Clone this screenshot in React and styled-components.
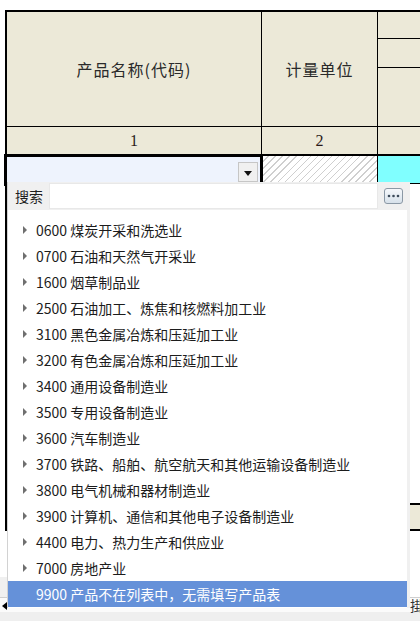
import React from "react";
import styled, { createGlobalStyle } from "styled-components";

const GlobalStyle = createGlobalStyle`
  html, body { margin: 0; padding: 0; background: #fff; overflow: hidden; }
  #root { width: 420px; height: 621px; overflow: hidden; }
  * { box-sizing: border-box; }
`;

const Page = styled.div`
  position: relative;
  width: 420px;
  height: 621px;
  overflow: hidden;
  padding-top: 10px;
  background: #fff;
  font-family: "Noto Sans CJK SC", "Noto Sans", sans-serif;
`;

const Sheet = styled.div`
  margin-left: 5px;
  width: 520px;
  border-left: 2px solid #000;
  border-top: 2px solid #000;
`;

const Row = styled.div`
  display: flex;
  height: ${(p) => p.$h}px;
  background: ${(p) => p.$bg || "#fff"};
  border-top: ${(p) => (p.$bt ? `${p.$bt}px solid #000` : "none")};
  border-bottom: ${(p) => (p.$bb ? `${p.$bb}px solid #000` : "none")};
  box-sizing: content-box;
`;

const Cell = styled.div`
  flex: ${(p) => (p.$w ? `0 0 ${p.$w}px` : "1 1 auto")};
  border-right: ${(p) => (p.$w ? "1px solid #000" : "none")};
  display: flex;
  align-items: center;
  justify-content: center;
  color: #222;
`;

const HeadText = styled.span`
  font-family: "Noto Sans CJK SC", sans-serif;
  font-size: 16px;
  letter-spacing: 1px;
  color: #2a2a2a;
`;

const NumText = styled.span`
  font-family: "Liberation Serif", serif;
  font-size: 16px;
  color: #2a1a1a;
`;

const SubStack = styled.div`
  flex: 1 1 auto;
  display: flex;
  flex-direction: column;
`;

const SubRow = styled.div`
  flex: ${(p) => (p.$h ? `0 0 ${p.$h}px` : "1 1 auto")};
  border-bottom: ${(p) => (p.$h ? "1px solid #000" : "none")};
`;

const SelectCell = styled(Cell)`
  position: relative;
  background: #eef3fd;
  justify-content: flex-end;
  align-items: flex-end;
  padding: 0 3px 1px 0;
`;

const SelectionFrame = styled.div`
  position: absolute;
  left: -3px;
  top: -2px;
  width: 259px;
  height: 32px;
  border: 3px solid #000;
  pointer-events: none;
`;

const DropButton = styled.div`
  width: 20px;
  height: 20px;
  background: #f0f0f0;
  border: 1px solid #c6c6c6;
  display: flex;
  align-items: center;
  justify-content: center;
  &::after {
    content: "";
    border-top: 5px solid #111;
    border-left: 4px solid transparent;
    border-right: 4px solid transparent;
    margin-top: 2px;
  }
`;

const HatchCell = styled(Cell)`
  background: repeating-linear-gradient(
    135deg,
    #fff 0px,
    #fff 4px,
    #cfcfcf 4px,
    #cfcfcf 5px
  );
`;

const CyanCell = styled(Cell)`
  background: #80ffff;
`;

const Gap = styled.div`
  height: ${(p) => p.$h}px;
  background: ${(p) => p.$bg || "#fff"};
  display: flex;
`;

const Corner = styled.div`
  flex: 0 0 8px;
  background: #f0f0f0;
`;

const TabBar = styled.div`
  height: 15px;
  border-top: 1px solid #cfcfcf;
  background: #fbfbfb;
  display: flex;
  align-items: center;
  padding-left: 2px;
  white-space: nowrap;
`;

const LeftArrow = styled.div`
  flex: 0 0 auto;
  border-right: 5px solid #000;
  border-top: 4px solid transparent;
  border-bottom: 4px solid transparent;
  margin-top: 2px;
`;

const TabSpacer = styled.div`
  flex: 0 0 403px;
`;

const TabLabel = styled.span`
  font-size: 14px;
  color: #333;
  line-height: 14px;
`;

const BottomStrip = styled.div`
  height: 20px;
  background: #efefef;
`;

/* popup */
const Popup = styled.div`
  position: absolute;
  left: 7px;
  top: 182px;
  width: 403px;
  height: 426px;
  background: #f0f0f0;
  border-left: 1px solid #d2d2d2;
  z-index: 5;
  display: flex;
  flex-direction: column;
`;

const SearchRow = styled.div`
  flex: 0 0 28px;
  display: flex;
  align-items: center;
  padding-left: 7px;
`;

const SearchLabel = styled.span`
  font-size: 14px;
  color: #1e1e1e;
  width: 28px;
  line-height: 16px;
`;

const SearchInput = styled.div`
  margin-left: 6px;
  width: 329px;
  height: 26px;
  background: #fff;
  border: 1px solid #e8e8e8;
`;

const MoreButton = styled.div`
  margin-left: 6px;
  width: 19px;
  height: 16px;
  border: 1px solid #8b98a5;
  border-radius: 3px;
  background: linear-gradient(#f6f8fb, #d7e1ea);
  display: flex;
  align-items: center;
  justify-content: center;
`;

const List = styled.div`
  flex: 1 1 auto;
  margin-right: 3px;
  background: #fff;
  padding-top: 7px;
  overflow: hidden;
`;

const Item = styled.div`
  height: 26px;
  display: flex;
  align-items: center;
  padding-left: 15px;
  font-size: 14px;
  white-space: nowrap;
  color: ${(p) => (p.$active ? "#fff" : "#1c1c1c")};
  background: ${(p) => (p.$active ? "#6591d9" : "transparent")};
`;

const Caret = styled.span`
  flex: 0 0 auto;
  width: 0;
  height: 0;
  border-left: 4px solid ${(p) => (p.$hidden ? "transparent" : "#6f6f6f")};
  border-top: 4px solid transparent;
  border-bottom: 4px solid transparent;
  margin-right: 9px;
`;

const items = [
  "0600 煤炭开采和洗选业",
  "0700 石油和天然气开采业",
  "1600 烟草制品业",
  "2500 石油加工、炼焦和核燃料加工业",
  "3100 黑色金属冶炼和压延加工业",
  "3200 有色金属冶炼和压延加工业",
  "3400 通用设备制造业",
  "3500 专用设备制造业",
  "3600 汽车制造业",
  "3700 铁路、船舶、航空航天和其他运输设备制造业",
  "3800 电气机械和器材制造业",
  "3900 计算机、通信和其他电子设备制造业",
  "4400 电力、热力生产和供应业",
  "7000 房地产业",
];

export default function App() {
  return (
    <Page>
      <GlobalStyle />
      <Sheet>
        <Row $h={114} $bb={1} $bg="#ece9d8">
          <Cell $w={255}>
            <HeadText>产品名称(代码)</HeadText>
          </Cell>
          <Cell $w={116}>
            <HeadText>计量单位</HeadText>
          </Cell>
          <SubStack>
            <SubRow $h={27} />
            <SubRow $h={29} />
            <SubRow />
          </SubStack>
        </Row>
        <Row $h={27} $bb={2} $bg="#ece9d8">
          <Cell $w={255}>
            <NumText>1</NumText>
          </Cell>
          <Cell $w={116}>
            <NumText>2</NumText>
          </Cell>
          <Cell />
        </Row>
        <Row $h={27} $bb={1}>
          <SelectCell $w={255}>
            <DropButton />
            <SelectionFrame />
          </SelectCell>
          <HatchCell $w={116} />
          <CyanCell />
        </Row>
        <Row $h={319} />
        <Row $h={24} $bt={2} $bb={2} $bg="#ece9d8" />
      </Sheet>
      <Gap $h={46} />
      <Gap $h={20}>
        <Corner />
      </Gap>
      <TabBar>
        <LeftArrow />
        <TabSpacer />
        <TabLabel>掛接</TabLabel>
      </TabBar>
      <BottomStrip />

      <Popup>
        <SearchRow>
          <SearchLabel>搜索</SearchLabel>
          <SearchInput />
          <MoreButton>
            <svg width="13" height="4" viewBox="0 0 13 4">
              <circle cx="2" cy="2" r="1.3" fill="#3d4b5a" />
              <circle cx="6.5" cy="2" r="1.3" fill="#3d4b5a" />
              <circle cx="11" cy="2" r="1.3" fill="#3d4b5a" />
            </svg>
          </MoreButton>
        </SearchRow>
        <List>
          {items.map((t) => (
            <Item key={t}>
              <Caret />
              {t}
            </Item>
          ))}
          <Item $active>
            <Caret $hidden />
            9900 产品不在列表中，无需填写产品表
          </Item>
        </List>
      </Popup>
    </Page>
  );
}
